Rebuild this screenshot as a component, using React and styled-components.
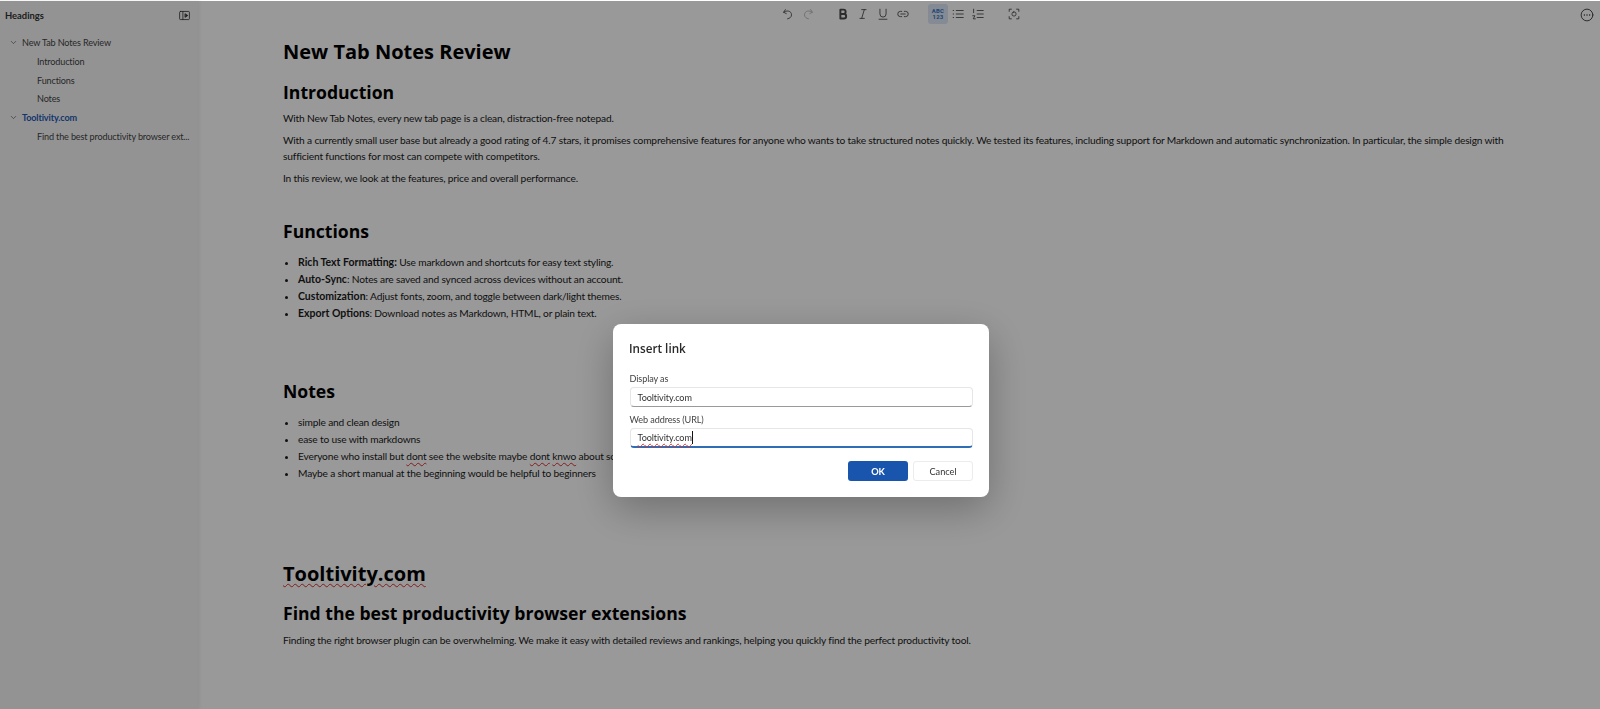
import React from "react";
import styled, { createGlobalStyle } from "styled-components";
import { ChevronDown } from "lucide-react";

const GlobalStyle = createGlobalStyle`
  html, body {
    margin: 0;
    height: 100%;
    overflow: hidden;
    background: #fff;
    font-family: Lato, "Noto Sans", sans-serif;
    color: #1f1f1f;
  }
`;

const Page = styled.div`
  display: flex;
  height: 709px;
  width: 1600px;
  box-sizing: border-box;
`;

const Sidebar = styled.aside`
  width: 198px;
  flex: none;
  background: #f6f6f6;
  box-shadow: 1px 0 4px rgba(0, 0, 0, 0.08);
  padding-top: 6px;
  box-sizing: border-box;
`;

const SidebarHeader = styled.div`
  display: flex;
  align-items: center;
  justify-content: space-between;
  height: 18px;
  padding: 0 7px 0 5px;
  font-size: 9.4px;
  font-weight: 700;
  color: #333;
`;

const Tree = styled.ul`
  list-style: none;
  margin: 9.5px 0 0;
  padding: 0;
`;

const TreeRow = styled.li`
  display: flex;
  align-items: center;
  height: 18.7px;
  padding-left: ${(p) => (p.$child ? "37px" : "9px")};
  gap: 4px;
  font-size: 9.1px;
  letter-spacing: -0.15px;
  font-weight: ${(p) => (p.$active ? 700 : 400)};
  color: ${(p) => (p.$active ? "#1f5ab5" : "#444")};
  white-space: nowrap;
`;

const Chevron = styled(ChevronDown)`
  width: 9px;
  height: 9px;
  color: #666;
  flex: none;
`;

const Main = styled.main`
  flex: 1;
  min-width: 0;
  position: relative;
`;

const Toolbar = styled.div`
  display: flex;
  align-items: center;
  height: 28px;
  padding-left: 580px;
`;

const ToolGroup = styled.div`
  display: flex;
  align-items: center;
  margin-right: ${(p) => p.$gap}px;
`;

const ToolButton = styled.div`
  width: 20px;
  height: 20px;
  display: flex;
  align-items: center;
  justify-content: center;
  border-radius: 3px;
  background: ${(p) => (p.$on ? "#dce8f7" : "transparent")};
  color: ${(p) => (p.$off ? "#b5b5b5" : "#4a4a4a")};
  svg {
    display: block;
  }
`;

const SpellIcon = styled.span`
  font-family: Roboto, sans-serif;
  font-size: 6px;
  line-height: 6.5px;
  font-weight: 700;
  color: #3a72c0;
  text-align: center;
  letter-spacing: 0.2px;
`;

const MoreButton = styled.div`
  position: absolute;
  right: 6px;
  top: 6px;
  width: 14px;
  height: 14px;
  color: #333;
`;

const Editor = styled.article`
  padding: 0 70px 0 85px;
  color: #1a1a1a;
  font-size: 10.2px;
  letter-spacing: -0.17px;
  line-height: 15.3px;
  b {
    font-size: 10.5px;
    letter-spacing: 0;
  }
`;

const Title = styled.h1`
  margin: ${(p) => p.$top || 0}px 0 0;
  font-family: "Open Sans", sans-serif;
  font-size: 20px;
  line-height: 32px;
  font-weight: 700;
  letter-spacing: 0;
  color: #000;
`;

const Heading = styled.h2`
  margin: ${(p) => p.$top || 0}px 0 0;
  font-family: "Open Sans", sans-serif;
  font-size: 17.6px;
  line-height: 28px;
  font-weight: 700;
  letter-spacing: 0;
  color: #000;
`;

const Para = styled.p`
  margin: ${(p) => p.$top || 7}px 0 0;
`;

const List = styled.ul`
  margin: 9px 0 0;
  padding: 0 0 0 15px;
  li {
    line-height: 17px;
  }
`;

const Typo = styled.span`
  text-decoration: underline wavy #d83030;
  text-decoration-thickness: 0.7px;
  text-underline-offset: 1.5px;
`;

const Overlay = styled.div`
  position: fixed;
  inset: 1px 0 0 0;
  background: rgba(0, 0, 0, 0.4);
`;

const Dialog = styled.div`
  position: absolute;
  left: 613px;
  top: 323px;
  width: 376px;
  height: 173px;
  box-sizing: border-box;
  padding: 15px 16px 0 16px;
  background: #fff;
  border-radius: 8px;
  box-shadow: 0 12px 40px rgba(0, 0, 0, 0.28);
`;

const DialogTitle = styled.div`
  font-family: "Open Sans", sans-serif;
  font-size: 11.7px;
  font-weight: 600;
  line-height: 18px;
  color: #2a2a2a;
  margin-bottom: 14px;
`;

const Field = styled.label`
  display: block;
  margin: 0 0 5px 0.5px;
`;

const FieldLabel = styled.div`
  font-size: 9.1px;
  letter-spacing: -0.1px;
  line-height: 15px;
  color: #444;
  margin-bottom: 1px;
`;

const FieldBox = styled.div`
  height: 20px;
  width: 343px;
  box-sizing: border-box;
  padding: 0 7px;
  display: flex;
  align-items: center;
  font-size: 9.1px;
  letter-spacing: -0.1px;
  color: #333;
  border: 1px solid #e6e6e6;
  border-bottom: ${(p) => (p.$focus ? "2px solid #2f6db5" : "1px solid #9a9a9a")};
  border-radius: 4px;
`;

const Caret = styled.span`
  display: inline-block;
  width: 1px;
  height: 13px;
  background: #111;
`;

const DialogActions = styled.div`
  display: flex;
  justify-content: flex-end;
  gap: 5px;
  margin-top: 13px;
`;

const DialogButton = styled.div`
  width: 60px;
  height: 20px;
  display: flex;
  align-items: center;
  justify-content: center;
  box-sizing: border-box;
  border-radius: 3px;
  font-size: 9.2px;
  font-weight: ${(p) => (p.$primary ? 700 : 400)};
  background: ${(p) => (p.$primary ? "#1a55ad" : "#fff")};
  color: ${(p) => (p.$primary ? "#fff" : "#333")};
  border: ${(p) => (p.$primary ? "none" : "1px solid #ececec")};
`;

const Icon = ({ children, size = 14 }) => (
  <svg
    width={size}
    height={size}
    viewBox="0 0 16 16"
    fill="none"
    stroke="currentColor"
    strokeWidth="1"
    strokeLinecap="round"
    strokeLinejoin="round"
  >
    {children}
  </svg>
);

export default function App() {
  return (
    <>
      <GlobalStyle />
      <Page>
        <Sidebar>
          <SidebarHeader>
            Headings
            <Icon size={13}>
              <rect x="2" y="3" width="12" height="10" rx="1" />
              <path d="M6 3v10" />
              <path fill="currentColor" d="M9 6l3 2-3 2z" />
            </Icon>
          </SidebarHeader>
          <Tree>
            <TreeRow>
              <Chevron />
              New Tab Notes Review
            </TreeRow>
            <TreeRow $child>Introduction</TreeRow>
            <TreeRow $child>Functions</TreeRow>
            <TreeRow $child>Notes</TreeRow>
            <TreeRow $active>
              <Chevron />
              Tooltivity.com
            </TreeRow>
            <TreeRow $child>Find the best productivity browser ext...</TreeRow>
          </Tree>
        </Sidebar>
        <Main>
          <Toolbar>
            <ToolGroup $gap={15}>
              <ToolButton>
                <Icon>
                  <path d="M5 3 3 6l3 1.5" />
                  <path d="M3 6c3-2.5 9-2 9 3 0 2.5-2 4-4.5 4.5" />
                </Icon>
              </ToolButton>
              <ToolButton $off>
                <Icon>
                  <path d="m11 3 2 3-3 1.5" />
                  <path d="M13 6c-3-2.5-9-2-9 3 0 2.5 2 4 4.5 4.5" />
                </Icon>
              </ToolButton>
            </ToolGroup>
            <ToolGroup $gap={15}>
              <ToolButton>
                <Icon>
                  <path strokeWidth="2.2" d="M5 3h3.5a2.4 2.4 0 0 1 0 5H5zM5 8h4a2.6 2.6 0 0 1 0 5.2H5z" />
                </Icon>
              </ToolButton>
              <ToolButton>
                <Icon>
                  <path d="M6.5 3h5M4.5 13h5M9.5 3l-3 10" />
                </Icon>
              </ToolButton>
              <ToolButton>
                <Icon>
                  <path d="M4.5 2.5V8a3.5 3.5 0 0 0 7 0V2.5M3.5 14h9" />
                </Icon>
              </ToolButton>
              <ToolButton>
                <Icon>
                  <path d="M6.5 5H5a3 3 0 0 0 0 6h1.5M9.5 5H11a3 3 0 0 1 0 6H9.5M5.5 8h5" />
                </Icon>
              </ToolButton>
            </ToolGroup>
            <ToolGroup $gap={16}>
              <ToolButton $on>
                <SpellIcon>
                  ABC
                  <br />
                  123
                </SpellIcon>
              </ToolButton>
              <ToolButton>
                <Icon>
                  <path d="M6 4h8M6 8h8M6 12h8M2.5 4h.5M2.5 8h.5M2.5 12h.5" />
                </Icon>
              </ToolButton>
              <ToolButton>
                <Icon>
                  <path d="M7 4h7M7 8h7M7 12h7M3 2.5v4M2 10h2.5L2.5 13.5H5" />
                </Icon>
              </ToolButton>
            </ToolGroup>
            <ToolGroup $gap={0}>
              <ToolButton>
                <Icon>
                  <path d="M2.5 5V2.5H5M11 2.5h2.5V5M13.5 11v2.5H11M5 13.5H2.5V11" />
                  <rect x="5.7" y="5.7" width="4.6" height="4.6" rx="2" />
                </Icon>
              </ToolButton>
            </ToolGroup>
          </Toolbar>
          <MoreButton>
            <Icon>
              <circle cx="8" cy="8" r="6.7" />
              <path strokeWidth="1.6" d="M5 8h.01M8 8h.01M11 8h.01" />
            </Icon>
          </MoreButton>
          <Editor>
            <Title $top={8}>New Tab Notes Review</Title>
            <Heading $top={10}>Introduction</Heading>
            <Para $top={5}>With New Tab Notes, every new tab page is a clean, distraction-free notepad.</Para>
            <Para>
              With a currently small user base but already a good rating of 4.7 stars, it promises comprehensive
              features for anyone who wants to take structured notes quickly. We tested its features, including support
              for Markdown and automatic synchronization. In particular, the simple design with sufficient functions for
              most can compete with competitors.
            </Para>
            <Para>In this review, we look at the features, price and overall performance.</Para>
            <Heading $top={31}>Functions</Heading>
            <List>
              <li>
                <b>Rich Text Formatting:</b> Use markdown and shortcuts for easy text styling.
              </li>
              <li>
                <b>Auto-Sync</b>: Notes are saved and synced across devices without an account.
              </li>
              <li>
                <b>Customization</b>: Adjust fonts, zoom, and toggle between dark/light themes.
              </li>
              <li>
                <b>Export Options</b>: Download notes as Markdown, HTML, or plain text.
              </li>
            </List>
            <Heading $top={55}>Notes</Heading>
            <List>
              <li>simple and clean design</li>
              <li>ease to use with markdowns</li>
              <li>
                Everyone who install but <Typo>dont</Typo> see the website maybe <Typo>dont</Typo> <Typo>knwo</Typo> about
                some features
              </li>
              <li>Maybe a short manual at the beginning would be helpful to beginners</li>
            </List>
            <Title $top={76}>
              <Typo>Tooltivity.com</Typo>
            </Title>
            <Heading $top={9}>Find the best productivity browser extensions</Heading>
            <Para $top={6}>
              Finding the right browser plugin can be overwhelming. We make it easy with detailed reviews and rankings,
              helping you quickly find the perfect productivity tool.
            </Para>
          </Editor>
        </Main>
      </Page>
      <Overlay>
        <Dialog>
          <DialogTitle>Insert link</DialogTitle>
          <Field>
            <FieldLabel>Display as</FieldLabel>
            <FieldBox>Tooltivity.com</FieldBox>
          </Field>
          <Field>
            <FieldLabel>Web address (URL)</FieldLabel>
            <FieldBox $focus>
              <Typo>Tooltivity.com</Typo>
              <Caret />
            </FieldBox>
          </Field>
          <DialogActions>
            <DialogButton $primary>OK</DialogButton>
            <DialogButton>Cancel</DialogButton>
          </DialogActions>
        </Dialog>
      </Overlay>
    </>
  );
}
